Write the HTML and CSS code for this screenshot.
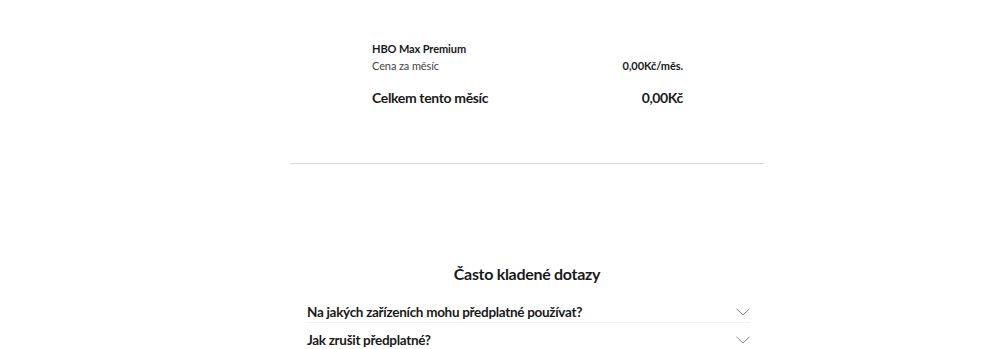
FILE: index.html
```html
<!DOCTYPE html>
<html lang="cs">
<head>
<meta charset="utf-8">
<link rel="stylesheet" href="styles.css">
</head>
<body>
<div class="page">
  <section class="summary">
    <div class="item-name">HBO Max Premium</div>
    <div class="row small">
      <span class="label">Cena za měsíc</span>
      <span class="value">0,00Kč/měs.</span>
    </div>
    <div class="row total">
      <span>Celkem tento měsíc</span>
      <span>0,00Kč</span>
    </div>
  </section>
  <hr class="divider">
  <section class="faq">
    <h2>Často kladené dotazy</h2>
    <ul class="faq-list">
      <li class="faq-item">
        <span>Na jakých zařízeních mohu předplatné používat?</span>
        <svg class="chev" viewBox="0 0 14 8" width="14" height="8"><path d="M0.5 0.8 L7 7 L13.5 0.8" fill="none" stroke="#8a8a8a" stroke-width="1"/></svg>
      </li>
      <li class="faq-item">
        <span>Jak zrušit předplatné?</span>
        <svg class="chev" viewBox="0 0 14 8" width="14" height="8"><path d="M0.5 0.8 L7 7 L13.5 0.8" fill="none" stroke="#8a8a8a" stroke-width="1"/></svg>
      </li>
    </ul>
  </section>
</div>
</body>
</html>
```

FILE: styles.css
```css
html, body {
  margin: 0;
  padding: 0;
  background: #fff;
}
body {
  font-family: "Lato", "Open Sans", sans-serif;
  color: #1a1a1a;
  overflow: hidden;
  height: 349px;
}
.page {
  width: 474px;
  margin-left: 290px;
  padding-top: 42px;
}
.summary {
  width: 311px;
  margin-left: 82px;
}
.item-name {
  font-size: 11px;
  font-weight: 700;
  line-height: 14px;
  letter-spacing: -0.1px;
}
.row {
  display: flex;
  justify-content: space-between;
  align-items: center;
}
.row.small {
  font-size: 11px;
  line-height: 14px;
  margin-top: 3px;
  letter-spacing: -0.1px;
}
.row.small .label {
  color: #444;
}
.row.small .value {
  font-weight: 700;
}
.row.total {
  font-size: 14px;
  font-weight: 700;
  line-height: 18px;
  margin-top: 16px;
  letter-spacing: -0.35px;
}
.divider {
  border: 0;
  border-top: 1px solid #d9d9d9;
  margin: 56px 0 0 0;
  height: 0;
}
.faq h2 {
  margin: 99px 0 0 0;
  text-align: center;
  font-size: 16px;
  font-weight: 700;
  line-height: 22px;
  letter-spacing: -0.3px;
}
.faq-list {
  list-style: none;
  margin: 10px 0 0 17px;
  padding: 0;
  width: 443px;
}
.faq-item {
  display: flex;
  justify-content: space-between;
  align-items: center;
  font-size: 13.5px;
  font-weight: 700;
  line-height: 14px;
  padding: 10px 0 3px 0;
  letter-spacing: -0.3px;
  border-bottom: 1px solid #f0f0f0;
}
.chev {
  margin-right: 0;
  flex: none;
}
```
